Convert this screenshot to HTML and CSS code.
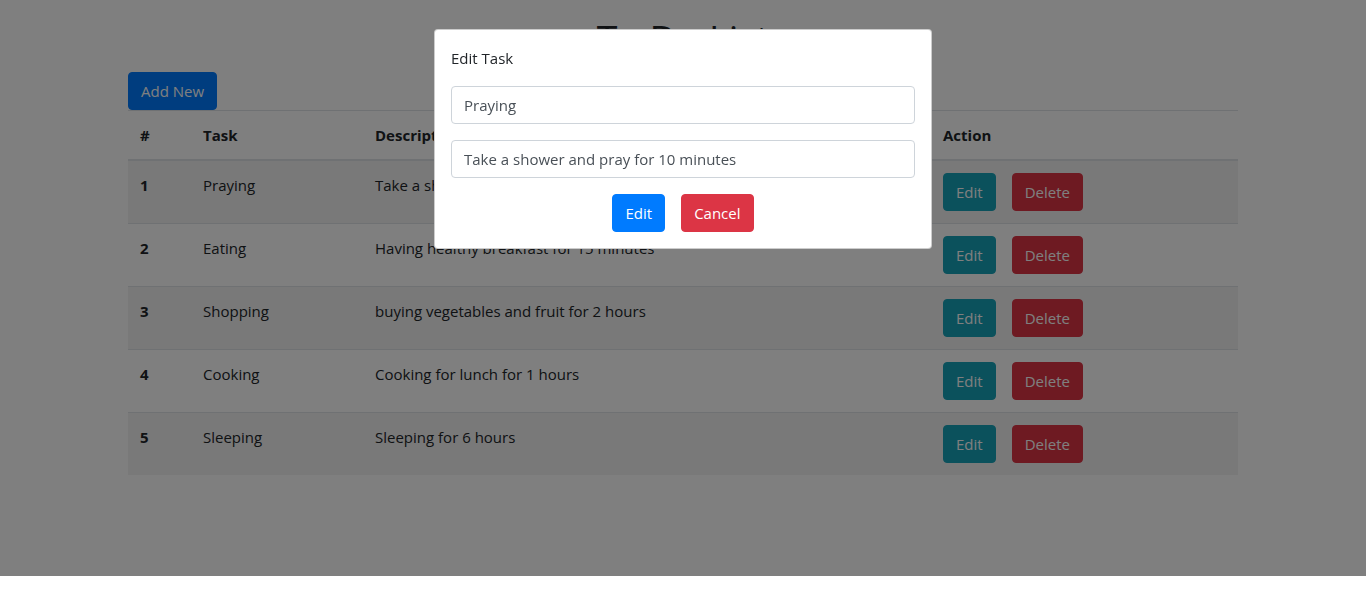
FILE: index.html
```html
<!DOCTYPE html>
<html lang="en">
<head>
<meta charset="utf-8">
<title>To Do List</title>
<link rel="stylesheet" href="styles.css">
</head>
<body>
<div class="container">
  <h1 class="title">To Do List</h1>
  <button class="btn btn-primary">Add New</button>
  <table class="table">
    <colgroup>
      <col class="c-num"><col class="c-task"><col class="c-desc"><col class="c-act">
    </colgroup>
    <thead>
      <tr><th>#</th><th>Task</th><th>Description</th><th>Action</th></tr>
    </thead>
    <tbody>
      <tr><th>1</th><td>Praying</td><td>Take a shower and pray for 10 minutes</td><td><button class="btn btn-info">Edit</button><button class="btn btn-danger">Delete</button></td></tr>
      <tr><th>2</th><td>Eating</td><td>Having healthy breakfast for 15 minutes</td><td><button class="btn btn-info">Edit</button><button class="btn btn-danger">Delete</button></td></tr>
      <tr><th>3</th><td>Shopping</td><td>buying vegetables and fruit for 2 hours</td><td><button class="btn btn-info">Edit</button><button class="btn btn-danger">Delete</button></td></tr>
      <tr><th>4</th><td>Cooking</td><td>Cooking for lunch for 1 hours</td><td><button class="btn btn-info">Edit</button><button class="btn btn-danger">Delete</button></td></tr>
      <tr><th>5</th><td>Sleeping</td><td>Sleeping for 6 hours</td><td><button class="btn btn-info">Edit</button><button class="btn btn-danger">Delete</button></td></tr>
    </tbody>
  </table>
</div>

<div class="backdrop"></div>
<div class="modal">
  <div class="modal-content">
    <p class="modal-title">Edit Task</p>
    <div class="form-group"><input class="form-control" type="text" value="Praying"></div>
    <div class="form-group"><input class="form-control" type="text" value="Take a shower and pray for 10 minutes"></div>
    <div class="modal-actions">
      <button class="btn btn-primary">Edit</button>
      <button class="btn btn-danger">Cancel</button>
    </div>
  </div>
</div>
</body>
</html>
```
FILE: styles.css
```css
* { box-sizing: border-box; }
html, body { margin: 0; }
body {
  font-family: "Open Sans", "Noto Sans", sans-serif;
  font-size: 15px;
  line-height: 24px;
  color: #212529;
  background: #fff;
  height: 592px;
  overflow: hidden;
}
.container {
  width: 1140px;
  margin: 0 auto;
  padding: 16px 15px 0;
}
.title {
  margin: 0 0 8px;
  font-size: 37.5px;
  font-weight: 500;
  line-height: 48px;
  text-align: center;
}
.btn {
  display: inline-block;
  font-family: inherit;
  font-size: 15px;
  line-height: 24px;
  padding: 6px 12px;
  border: 1px solid transparent;
  border-radius: 4px;
  color: #fff;
  cursor: pointer;
}
.btn-primary { background: #007bff; border-color: #007bff; }
.btn-info { background: #17a2b8; border-color: #17a2b8; }
.btn-danger { background: #dc3545; border-color: #dc3545; }
.table {
  width: 1110px;
  border-collapse: collapse;
  table-layout: fixed;
  color: #212529;
}
.c-num { width: 63px; }
.c-task { width: 172px; }
.c-desc { width: 568px; }
.c-act { width: 307px; }
.table th, .table td {
  padding: 12px;
  text-align: left;
  vertical-align: top;
  border-top: 1px solid #dee2e6;
}
.table thead th { border-bottom: 2px solid #dee2e6; }
.table th { font-weight: 700; }
.table tbody tr:nth-of-type(odd) { background: rgba(0,0,0,.05); }
.table td .btn + .btn { margin-left: 16px; }

.backdrop {
  position: fixed;
  top: 0; left: 0; right: 0;
  height: 576px;
  background: rgba(0,0,0,.5);
}
.modal {
  position: fixed;
  top: 29px;
  left: 0; right: 0;
  display: flex;
  justify-content: center;
}
.modal-content {
  width: 498px;
  background: #fff;
  border: 1px solid rgba(0,0,0,.2);
  border-radius: 4px;
  padding: 16px;
}
.modal-title { margin: 0 0 16px; }
.form-group { margin-bottom: 16px; }
.form-control {
  display: block;
  width: 100%;
  height: 38px;
  padding: 6px 12px;
  font-family: inherit;
  font-size: 15px;
  line-height: 24px;
  color: #495057;
  background: #fff;
  border: 1px solid #ced4da;
  border-radius: 4px;
}
.modal-actions {
  display: flex;
  justify-content: center;
  gap: 16px;
}
```
